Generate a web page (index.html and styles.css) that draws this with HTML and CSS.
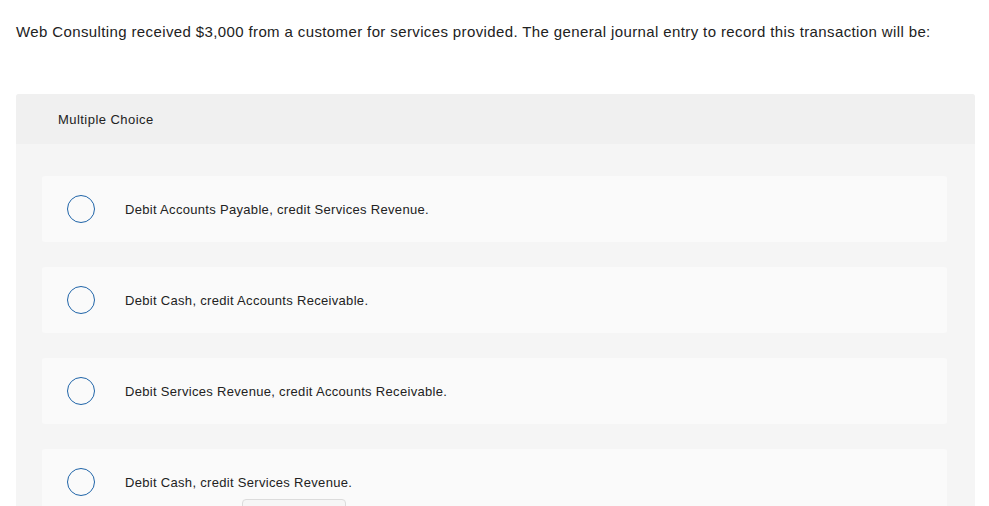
FILE: index.html
```html
<!DOCTYPE html>
<html>
<head>
<meta charset="utf-8">
<link rel="stylesheet" href="styles.css">
</head>
<body>
<p class="question">Web Consulting received $3,000 from a customer for services provided. The general journal entry to record this transaction will be:</p>
<div class="panel">
  <div class="panel-head">Multiple Choice</div>
  <div class="panel-body">
    <div class="option"><span class="radio"></span><span class="label">Debit Accounts Payable, credit Services Revenue.</span></div>
    <div class="option"><span class="radio"></span><span class="label">Debit Cash, credit Accounts Receivable.</span></div>
    <div class="option"><span class="radio"></span><span class="label">Debit Services Revenue, credit Accounts Receivable.</span></div>
    <div class="option"><span class="radio"></span><span class="label">Debit Cash, credit Services Revenue.</span></div>
  </div>
</div>
<div class="floating-btn"></div>
</body>
</html>
```
FILE: styles.css
```css
html, body {
  margin: 0;
  padding: 0;
  background: #ffffff;
  overflow: hidden;
  height: 506px;
}
body {
  font-family: "Liberation Sans", Arial, sans-serif;
  color: #222222;
  padding: 0 14px 0 16px;
}
.question {
  margin: 0;
  padding-top: 22px;
  font-size: 15px;
  line-height: 20px;
  height: 72px;
  letter-spacing: 0.38px;
}
.panel {
  border-radius: 3px 3px 0 0;
  background: #f5f5f5;
  overflow: hidden;
}
.panel-head {
  background: #f0f0f0;
  height: 50px;
  display: flex;
  align-items: center;
  padding-left: 42px;
  font-size: 13px;
  letter-spacing: 0.45px;
}
.panel-body {
  padding: 32px 28px 20px 26px;
  display: flex;
  flex-direction: column;
  gap: 25px;
}
.option {
  background: #fafafa;
  border-radius: 3px;
  height: 66px;
  display: flex;
  align-items: center;
  padding-left: 25px;
  flex-shrink: 0;
}
.radio {
  width: 26px;
  height: 26px;
  border: 1.3px solid #1f64a8;
  border-radius: 50%;
  flex-shrink: 0;
}
.label {
  margin-left: 30px;
  font-size: 13px;
  letter-spacing: 0.31px;
}
.floating-btn {
  position: absolute;
  left: 242px;
  top: 499px;
  width: 102px;
  height: 30px;
  border: 1px solid #dcdcdc;
  border-radius: 4px;
  background: #f6f6f6;
}
```
